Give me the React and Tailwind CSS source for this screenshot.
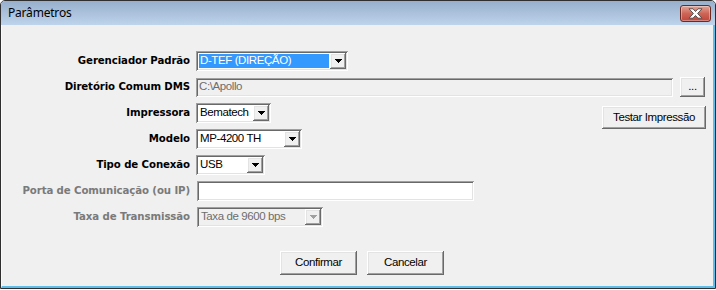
import React from "react";

const raised =
  "shadow-[inset_-1px_-1px_0_#696969,inset_1px_1px_0_#ffffff,inset_-2px_-2px_0_#a0a0a0,inset_2px_2px_0_#e3e3e3]";
const sunken =
  "shadow-[inset_1px_1px_0_#a0a0a0,inset_-1px_-1px_0_#ffffff,inset_2px_2px_0_#696969,inset_-2px_-2px_0_#e3e3e3]";

function Arrow({ disabled }) {
  return (
    <svg width="7" height="4" viewBox="0 0 7 4">
      <path
        d="M0 0h7v1h-1v1h-1v1h-1v1h-1v-1h-1v-1h-1v-1h-1z"
        fill={disabled ? "#a0a0a0" : "#000000"}
      />
    </svg>
  );
}

function Select({ className, value, highlight, disabled }) {
  return (
    <div
      className={`flex h-[20px] p-[2px] ${sunken} ${
        disabled ? "bg-[#f0f0f0]" : "bg-white"
      } ${className}`}
    >
      <div className="flex-1 flex items-stretch p-[1px] min-w-0">
        <div
          className={`flex-1 flex items-center pl-[1px] whitespace-nowrap ${
            highlight
              ? "bg-[#3399ff] text-white"
              : disabled
              ? "text-[#6d6d6d]"
              : "text-black"
          }`}
        >
          {value}
        </div>
      </div>
      <div
        className={`w-[16px] h-full flex items-center justify-center bg-[#f0f0f0] ${raised}`}
      >
        <Arrow disabled={disabled} />
      </div>
    </div>
  );
}

function Button({ className, children }) {
  return (
    <div
      className={`flex items-center justify-center bg-[#f0f0f0] text-black ${raised} ${className}`}
    >
      {children}
    </div>
  );
}

function Label({ children, disabled }) {
  return (
    <div
      className={`w-[188px] shrink-0 text-right font-['DejaVu_Sans',Verdana,sans-serif] font-bold text-[10.2px] tracking-[-0.1px] leading-none ${
        disabled ? "text-[#7a7a7a]" : "text-black"
      }`}
    >
      {children}
    </div>
  );
}

export default function App() {
  return (
    <div className="w-[716px] h-[290px] bg-white font-['Liberation_Sans',Arial,sans-serif] text-[11.5px] tracking-[-0.4px]">
      <div className="w-[716px] h-[289px] border border-[#2f2f2f] rounded-t-[5px] overflow-hidden flex flex-col">
        <div className="h-[24px] shrink-0 flex bg-linear-to-b from-[#98afcc] to-[#bed4ec] pl-[7px] pr-[4px]">
          <div className="self-center font-['Noto_Sans',sans-serif] text-[12px] tracking-[-0.2px] text-black">
            Parâmetros
          </div>
          <div className="ml-auto mt-[4px] w-[31px] h-[17px] rounded-[3px] border border-[#6b2b25] bg-linear-to-b from-[#e3a597] via-[#cd6657] to-[#c0443a] shadow-[inset_0_0_0_1px_rgba(255,255,255,0.35)] flex items-center justify-center">
            <svg width="15" height="11" viewBox="0 0 15 11">
              <path
                d="M1 0.8h4l2.5 2.7L10 0.8h4L9.6 5.5 14 10.2h-4L7.5 7.5 5 10.2H1L5.4 5.5z"
                fill="#ffffff"
                stroke="#4f4545"
                strokeWidth="0.9"
              />
            </svg>
          </div>
        </div>
        <div className="flex-1 bg-[#f0f0f0] border-l border-l-[#fafafa] border-r-2 border-b-2 border-r-[#5fbee9] border-b-[#5fbee9] pt-[26px] pr-[7px] flex flex-col">
          <div className="flex items-center h-[20px]">
            <Label>Gerenciador Padrão</Label>
            <Select
              className="ml-[6px] w-[152px]"
              value="D-TEF (DIREÇÃO)"
              highlight
            />
          </div>
          <div className="flex items-center h-[20px] mt-[6px]">
            <Label>Diretório Comum DMS</Label>
            <div
              className={`ml-[6px] w-[477px] h-[19px] flex items-center pl-[3px] bg-[#f0f0f0] text-[#6d6d6d] ${sunken}`}
            >
              {"C:\\Apollo"}
            </div>
            <Button className="ml-[7px] w-[25px] h-[20px]">...</Button>
          </div>
          <div className="flex items-start h-[20px] mt-[6px]">
            <div className="flex items-center h-[20px]">
              <Label>Impressora</Label>
              <Select className="ml-[6px] w-[75px]" value="Bematech" />
            </div>
            <Button className="ml-auto mt-[3px] w-[104px] h-[23px] shrink-0">
              Testar Impressão
            </Button>
          </div>
          <div className="flex items-center h-[20px] mt-[6px]">
            <Label>Modelo</Label>
            <Select className="ml-[6px] w-[106px]" value="MP-4200 TH" />
          </div>
          <div className="flex items-center h-[20px] mt-[6px]">
            <Label>Tipo de Conexão</Label>
            <Select className="ml-[6px] w-[69px]" value="USB" />
          </div>
          <div className="flex items-center h-[20px] mt-[6px]">
            <Label disabled>Porta de Comunicação (ou IP)</Label>
            <div
              className={`ml-[7px] w-[277px] h-[20px] bg-white ${sunken}`}
            />
          </div>
          <div className="flex items-center h-[20px] mt-[6px]">
            <Label disabled>Taxa de Transmissão</Label>
            <Select
              className="ml-[7px] w-[126px]"
              value="Taxa de 9600 bps"
              disabled
            />
          </div>
          <div className="flex mt-[24px] pl-[278px] gap-[10px]">
            <Button className="w-[77px] h-[24px]">Confirmar</Button>
            <Button className="w-[77px] h-[24px]">Cancelar</Button>
          </div>
        </div>
      </div>
    </div>
  );
}
